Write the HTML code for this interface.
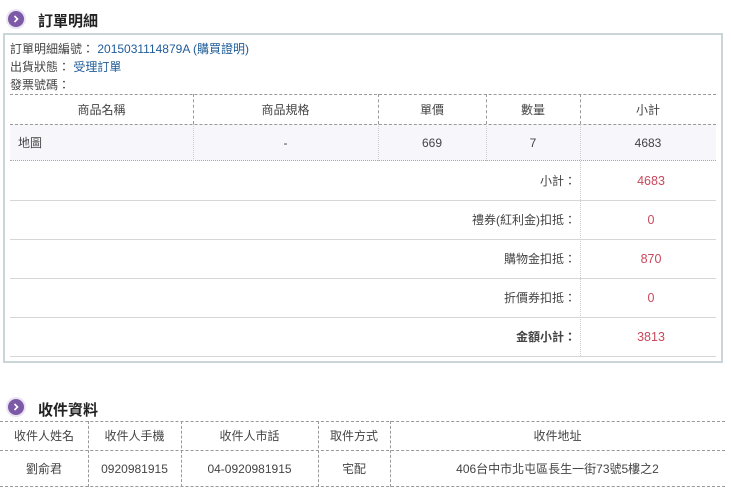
<!DOCTYPE html>
<html><head><meta charset="utf-8"><style>
*{margin:0;padding:0;box-sizing:border-box}
body{width:731px;height:496px;background:#fff;font-family:"Liberation Sans","Noto Sans CJK TC",sans-serif;font-size:12px;color:#444;position:relative;overflow:hidden}
.a{position:absolute}
.ic{width:20px;height:20px;border-radius:50%;background:#e9e4ef}
.ic i{position:absolute;left:2px;top:2px;width:16px;height:16px;border-radius:50%;background:#7c5aa8}
.ic svg{position:absolute;left:6px;top:5px}
.h{font-size:15px;color:#222;font-weight:bold}
.t{display:flex;align-items:center;justify-content:center;position:absolute}
.l{display:flex;align-items:center;justify-content:flex-end;position:absolute;left:10px;width:566px;height:39px}
.blue{color:#1f5c99}
.red{color:#c9485b;font-size:12.5px}
</style></head><body>
<div class="a ic" style="left:6px;top:9px"><i></i><svg width="8" height="10" viewBox="0 0 8 10"><path d="M2.5 2 L5.5 5 L2.5 8" stroke="#fff" stroke-width="1.6" fill="none"/></svg></div>
<div class="a h" style="left:38px;top:10px">訂單明細</div>

<div class="a" style="left:3px;top:33px;width:720px;height:330px;border:2px solid #c9d5d9"></div>
<div class="a" style="left:10px;top:40px;line-height:18px">訂單明細編號： <span class="blue">2015031114879A (購買證明)</span><br>出貨狀態： <span class="blue">受理訂單</span><br>發票號碼：</div>

<div class="a" style="left:10px;top:94px;width:706px;height:0;border-top:1px dashed #999"></div>
<div class="a" style="left:10px;top:124px;width:706px;height:37px;background:#f7f6fb;border-top:1px dashed #999;border-bottom:1px dotted #aaa"></div>
<div class="a" style="left:193px;top:94px;height:30px;border-left:1px dashed #999"></div>
<div class="a" style="left:378px;top:94px;height:30px;border-left:1px dashed #999"></div>
<div class="a" style="left:486px;top:94px;height:30px;border-left:1px dashed #999"></div>
<div class="a" style="left:580px;top:94px;height:30px;border-left:1px dashed #999"></div>
<div class="a" style="left:193px;top:124px;height:37px;border-left:1px dotted #ccc"></div>
<div class="a" style="left:378px;top:124px;height:37px;border-left:1px dotted #ccc"></div>
<div class="a" style="left:486px;top:124px;height:37px;border-left:1px dotted #ccc"></div>
<div class="a" style="left:580px;top:124px;height:232px;border-left:1px dotted #ccc"></div>

<div class="t" style="left:10px;top:94px;width:183px;height:30px">商品名稱</div>
<div class="t" style="left:193px;top:94px;width:185px;height:30px">商品規格</div>
<div class="t" style="left:378px;top:94px;width:108px;height:30px">單價</div>
<div class="t" style="left:486px;top:94px;width:94px;height:30px">數量</div>
<div class="t" style="left:580px;top:94px;width:136px;height:30px">小計</div>
<div class="t" style="left:18px;top:124px;height:37px">地圖</div>
<div class="t" style="left:193px;top:124px;width:185px;height:37px">-</div>
<div class="t" style="left:378px;top:124px;width:108px;height:37px">669</div>
<div class="t" style="left:486px;top:124px;width:94px;height:37px">7</div>
<div class="t" style="left:580px;top:124px;width:136px;height:37px">4683</div>

<div class="a" style="left:10px;top:200px;width:706px;border-top:1px solid #d6d6d6"></div>
<div class="a" style="left:10px;top:239px;width:706px;border-top:1px solid #d6d6d6"></div>
<div class="a" style="left:10px;top:278px;width:706px;border-top:1px solid #d6d6d6"></div>
<div class="a" style="left:10px;top:317px;width:706px;border-top:1px solid #d6d6d6"></div>
<div class="a" style="left:10px;top:356px;width:706px;border-top:1px solid #d6d6d6"></div>

<div class="l" style="top:161px">小計：</div>
<div class="t red" style="left:580px;top:161px;width:142px;height:39px">4683</div>
<div class="l" style="top:200px">禮券(紅利金)扣抵：</div>
<div class="t red" style="left:580px;top:200px;width:142px;height:39px">0</div>
<div class="l" style="top:239px">購物金扣抵：</div>
<div class="t red" style="left:580px;top:239px;width:142px;height:39px">870</div>
<div class="l" style="top:278px">折價券扣抵：</div>
<div class="t red" style="left:580px;top:278px;width:142px;height:39px">0</div>
<div class="l" style="top:317px;font-weight:bold">金額小計：</div>
<div class="t red" style="left:580px;top:317px;width:142px;height:39px">3813</div>

<div class="a ic" style="left:6px;top:397px"><i></i><svg width="8" height="10" viewBox="0 0 8 10"><path d="M2.5 2 L5.5 5 L2.5 8" stroke="#fff" stroke-width="1.6" fill="none"/></svg></div>
<div class="a h" style="left:38px;top:399px">收件資料</div>

<div class="a" style="left:0;top:421px;width:725px;height:66px;border-top:1px dashed #999;border-bottom:1px dashed #999"></div>
<div class="a" style="left:0;top:450px;width:725px;border-top:1px dashed #999"></div>
<div class="a" style="left:88px;top:421px;height:66px;border-left:1px dashed #999"></div>
<div class="a" style="left:181px;top:421px;height:66px;border-left:1px dashed #999"></div>
<div class="a" style="left:318px;top:421px;height:66px;border-left:1px dashed #999"></div>
<div class="a" style="left:390px;top:421px;height:66px;border-left:1px dashed #999"></div>

<div class="t" style="left:0;top:421px;width:88px;height:29px">收件人姓名</div>
<div class="t" style="left:88px;top:421px;width:93px;height:29px">收件人手機</div>
<div class="t" style="left:181px;top:421px;width:137px;height:29px">收件人市話</div>
<div class="t" style="left:318px;top:421px;width:72px;height:29px">取件方式</div>
<div class="t" style="left:390px;top:421px;width:335px;height:29px">收件地址</div>
<div class="t" style="left:0;top:450px;width:88px;height:37px">劉俞君</div>
<div class="t" style="left:88px;top:450px;width:93px;height:37px">0920981915</div>
<div class="t" style="left:181px;top:450px;width:137px;height:37px">04-0920981915</div>
<div class="t" style="left:318px;top:450px;width:72px;height:37px">宅配</div>
<div class="t" style="left:390px;top:450px;width:335px;height:37px">406台中市北屯區長生一街73號5樓之2</div>
</body></html>
